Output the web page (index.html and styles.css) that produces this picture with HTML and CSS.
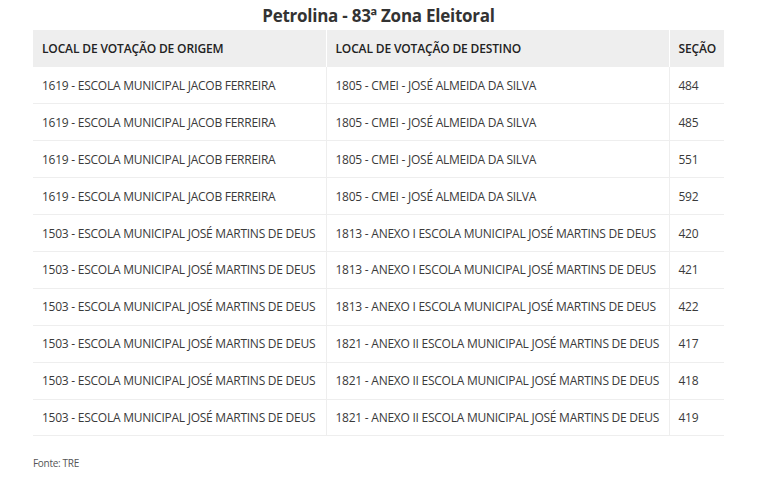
FILE: index.html
```html
<!DOCTYPE html>
<html lang="pt-BR">
<head>
<meta charset="utf-8">
<link rel="stylesheet" href="styles.css">
</head>
<body>
<div class="wrap">
  <h1 class="title">Petrolina - 83ª Zona Eleitoral</h1>
  <table class="tbl">
    <thead>
      <tr><th class="c1">LOCAL DE VOTAÇÃO DE ORIGEM</th><th class="c2">LOCAL DE VOTAÇÃO DE DESTINO</th><th class="c3">SEÇÃO</th></tr>
    </thead>
    <tbody>
      <tr><td>1619 - ESCOLA MUNICIPAL JACOB FERREIRA</td><td>1805 - CMEI - JOSÉ ALMEIDA DA SILVA</td><td>484</td></tr>
      <tr><td>1619 - ESCOLA MUNICIPAL JACOB FERREIRA</td><td>1805 - CMEI - JOSÉ ALMEIDA DA SILVA</td><td>485</td></tr>
      <tr><td>1619 - ESCOLA MUNICIPAL JACOB FERREIRA</td><td>1805 - CMEI - JOSÉ ALMEIDA DA SILVA</td><td>551</td></tr>
      <tr><td>1619 - ESCOLA MUNICIPAL JACOB FERREIRA</td><td>1805 - CMEI - JOSÉ ALMEIDA DA SILVA</td><td>592</td></tr>
      <tr><td>1503 - ESCOLA MUNICIPAL JOSÉ MARTINS DE DEUS</td><td>1813 - ANEXO I ESCOLA MUNICIPAL JOSÉ MARTINS DE DEUS</td><td>420</td></tr>
      <tr><td>1503 - ESCOLA MUNICIPAL JOSÉ MARTINS DE DEUS</td><td>1813 - ANEXO I ESCOLA MUNICIPAL JOSÉ MARTINS DE DEUS</td><td>421</td></tr>
      <tr><td>1503 - ESCOLA MUNICIPAL JOSÉ MARTINS DE DEUS</td><td>1813 - ANEXO I ESCOLA MUNICIPAL JOSÉ MARTINS DE DEUS</td><td>422</td></tr>
      <tr><td>1503 - ESCOLA MUNICIPAL JOSÉ MARTINS DE DEUS</td><td>1821 - ANEXO II ESCOLA MUNICIPAL JOSÉ MARTINS DE DEUS</td><td>417</td></tr>
      <tr><td>1503 - ESCOLA MUNICIPAL JOSÉ MARTINS DE DEUS</td><td>1821 - ANEXO II ESCOLA MUNICIPAL JOSÉ MARTINS DE DEUS</td><td>418</td></tr>
      <tr><td>1503 - ESCOLA MUNICIPAL JOSÉ MARTINS DE DEUS</td><td>1821 - ANEXO II ESCOLA MUNICIPAL JOSÉ MARTINS DE DEUS</td><td>419</td></tr>
    </tbody>
  </table>
  <p class="source">Fonte: TRE</p>
</div>
</body>
</html>
```
FILE: styles.css
```css
html, body {
  margin: 0;
  padding: 0;
  background: #fff;
}
body {
  font-family: "Open Sans", "Liberation Sans", sans-serif;
  color: #333;
}
.wrap {
  width: 691px;
  margin-left: 33px;
  padding-top: 4px;
}
.title {
  margin: 0;
  height: 26px;
  font-size: 17px;
  font-weight: 700;
  line-height: 24px;
  text-align: center;
  color: #333;
  letter-spacing: -0.25px;
}
.tbl {
  width: 691px;
  border-collapse: collapse;
  table-layout: fixed;
}
.c1 { width: 293px; }
.c2 { width: 343px; }
.tbl th, .tbl td {
  padding: 0 0 0 9px;
  text-align: left;
  vertical-align: middle;
  font-size: 12px;
  letter-spacing: -0.25px;
  white-space: nowrap;
  box-sizing: border-box;
}
.tbl th {
  height: 37px;
  background: #eee;
  font-weight: 600;
  color: #222;
  letter-spacing: -0.15px;
  border-left: 1px solid #fff;
}
.tbl th:first-child { border-left: none; }
.tbl td {
  height: 36.9px;
  border-bottom: 1px solid #eee;
  border-left: 1px solid #eee;
  color: #3a3a3a;
}
.tbl td:first-child { border-left: none; }
.source {
  margin: 20px 0 0;
  font-size: 10px;
  color: #555;
  letter-spacing: -0.3px;
}
```
